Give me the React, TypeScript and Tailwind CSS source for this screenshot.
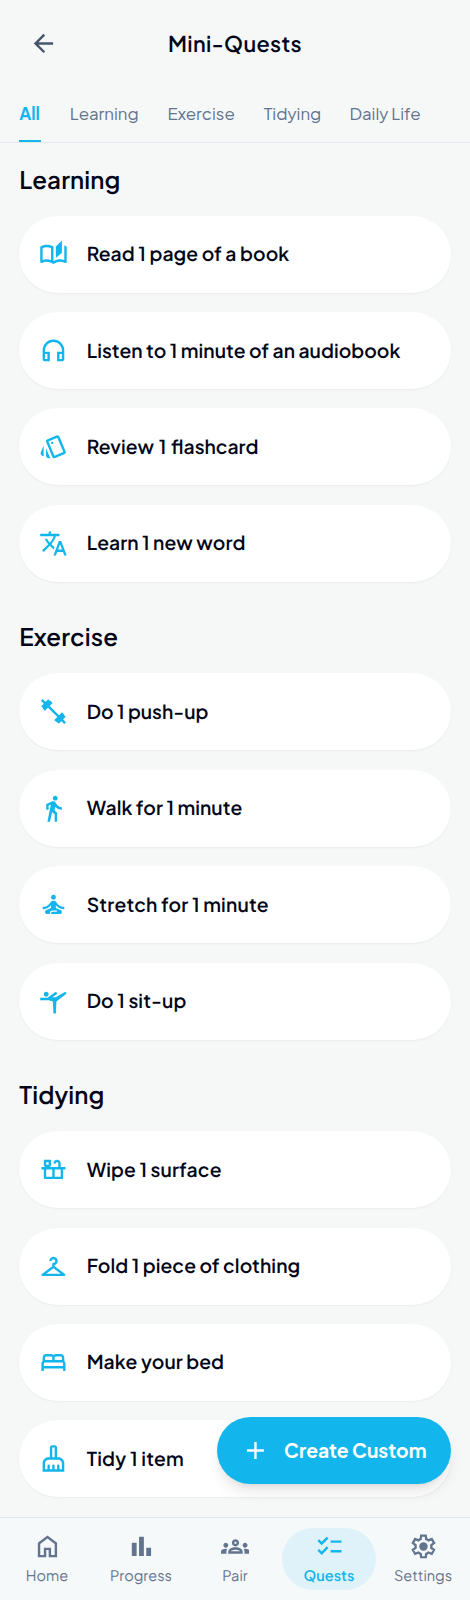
import type { ComponentType } from "react";
import {
  MdAdd,
  MdArrowBack,
  MdBarChart,
  MdCheckroom,
  MdChecklist,
  MdDirectionsWalk,
  MdOutlineAutoStories,
  MdOutlineBed,
  MdOutlineCleaningServices,
  MdOutlineCountertops,
  MdOutlineGroups,
  MdOutlineHeadphones,
  MdOutlineStyle,
  MdSelfImprovement,
  MdSportsGymnastics,
  MdTranslate,
} from "react-icons/md";

type Icon = ComponentType<{ className?: string }>;
type Quest = { label: string; icon: Icon; spacing: string };
type Section = { title: string; quests: Quest[] };

function HomeIcon({ className }: { className?: string }) {
  return (
    <svg viewBox="0 0 24 24" fill="currentColor" className={className}>
      <path d="M6 19h3v-6h6v6h3v-9l-6-4.5L6 10v9Zm-2 2V9l8-6 8 6v12h-7v-6h-2v6H4Z" />
    </svg>
  );
}

const gear =
  "m9.25 22-.4-3.2q-.325-.125-.612-.3-.288-.175-.563-.375L4.7 19.375l-2.75-4.75 2.575-1.95Q4.5 12.5 4.5 12.337v-.675q0-.162.025-.337L1.95 9.375l2.75-4.75 2.975 1.25q.275-.2.575-.375.3-.175.6-.3l.4-3.2h5.5l.4 3.2q.325.125.613.3.287.175.562.375l2.975-1.25 2.75 4.75-2.575 1.95q.025.175.025.337v.675q0 .163-.05.338l2.575 1.95-2.75 4.75-2.95-1.25q-.275.2-.575.375-.3.175-.6.3l-.4 3.2Z";

function SettingsIcon({ className }: { className?: string }) {
  return (
    <svg viewBox="0 0 24 24" className={className}>
      <clipPath id="gear-shape">
        <path d={gear} />
      </clipPath>
      <path d={gear} fill="none" stroke="currentColor" strokeWidth="3.8" clipPath="url(#gear-shape)" />
      <circle cx="12" cy="12" r="3.5" fill="currentColor" />
    </svg>
  );
}

function DumbbellIcon({ className }: { className?: string }) {
  return (
    <svg viewBox="0 0 24 24" fill="none" stroke="currentColor" className={className}>
      <path strokeWidth="2" d="m7 7 10 10" />
      <path strokeWidth="2.6" d="M2.7 8.5 8.5 2.7M4 10.4 10.4 4M13.6 20 20 13.6M15.5 21.3l5.8-5.8" />
      <path strokeWidth="2.1" d="m2.3 2.3 4 4M17.7 17.7l4 4" />
    </svg>
  );
}

const sections: Section[] = [
  {
    title: "Learning",
    quests: [
      { label: "Read 1 page of a book", icon: MdOutlineAutoStories, spacing: "tracking-[0.08px]" },
      { label: "Listen to 1 minute of an audiobook", icon: MdOutlineHeadphones, spacing: "tracking-[0.04px]" },
      { label: "Review 1 flashcard", icon: MdOutlineStyle, spacing: "[word-spacing:1.4px]" },
      { label: "Learn 1 new word", icon: MdTranslate, spacing: "tracking-[0.07px]" },
    ],
  },
  {
    title: "Exercise",
    quests: [
      { label: "Do 1 push-up", icon: DumbbellIcon, spacing: "tracking-normal" },
      { label: "Walk for 1 minute", icon: MdDirectionsWalk, spacing: "tracking-[0.06px]" },
      { label: "Stretch for 1 minute", icon: MdSelfImprovement, spacing: "tracking-[0.16px]" },
      { label: "Do 1 sit-up", icon: MdSportsGymnastics, spacing: "tracking-[0.1px]" },
    ],
  },
  {
    title: "Tidying",
    quests: [
      { label: "Wipe 1 surface", icon: MdOutlineCountertops, spacing: "tracking-[0.1px]" },
      { label: "Fold 1 piece of clothing", icon: MdCheckroom, spacing: "tracking-[0.07px]" },
      { label: "Make your bed", icon: MdOutlineBed, spacing: "tracking-[0.06px]" },
      { label: "Tidy 1 item", icon: MdOutlineCleaningServices, spacing: "tracking-[0.2px]" },
    ],
  },
];

const tabs = [
  { label: "All", width: "w-[21.6px]", active: true },
  { label: "Learning", width: "w-[68.8px]", active: false },
  { label: "Exercise", width: "w-[67.3px]", active: false },
  { label: "Tidying", width: "w-[57px]", active: false },
  { label: "Daily Life", width: "w-[71px]", active: false },
];

const navItems: { label: string; icon: Icon; active?: boolean }[] = [
  { label: "Home", icon: HomeIcon },
  { label: "Progress", icon: MdBarChart },
  { label: "Pair", icon: MdOutlineGroups },
  { label: "Quests", icon: MdChecklist, active: true },
  { label: "Settings", icon: SettingsIcon },
];

export default function App() {
  return (
    <div className="relative flex h-[1600px] w-[470px] flex-col overflow-hidden bg-[#f6f8f8] font-['Plus_Jakarta_Sans',Inter,sans-serif] text-slate-950 [--spacing:4.82px] [text-rendering:geometricPrecision]">
      <header className="flex h-18 shrink-0 items-center px-4">
        <button className="flex size-10 items-center justify-center text-slate-600">
          <MdArrowBack className="size-6" />
        </button>
        <h1 className="flex-1 pr-10 text-center text-[21.7px] font-semibold tracking-[0.3px] whitespace-nowrap">
          Mini-Quests
        </h1>
      </header>

      <nav className="flex shrink-0 gap-6 border-b border-slate-200 px-4 pt-3">
        {tabs.map((t) => (
          <button
            key={t.label}
            className={`flex h-[41px] shrink-0 items-start border-b-2 text-[16.9px] leading-[25.1px] whitespace-nowrap ${t.width} ${
              t.active ? "border-[#13b6ec] font-bold text-[#13b6ec]" : "border-transparent text-slate-500"
            }`}
          >
            {t.label}
          </button>
        ))}
      </nav>

      <main className="flex min-h-0 flex-1 flex-col gap-8 px-4 pt-[19.4px]">
        {sections.map((s) => (
          <section key={s.title} className="flex flex-col gap-4">
            <h2 className="h-7 text-[24.1px] leading-[35.5px] font-semibold tracking-[0.1px]">{s.title}</h2>
            {s.quests.map(({ label, icon: Icon, spacing }) => (
              <div
                key={label}
                className="flex h-16 items-center gap-4 rounded-full bg-white px-4 shadow-[0_1px_2px_rgba(0,0,0,0.05)]"
              >
                <Icon className="size-6 shrink-0 text-[#13b6ec]" />
                <span className={`pt-px text-[19.3px] font-semibold whitespace-nowrap ${spacing}`}>{label}</span>
              </div>
            ))}
          </section>
        ))}
      </main>

      <button className="absolute top-[1417px] right-[19px] flex h-[67px] w-[234px] items-center rounded-full bg-[#13b6ec] pl-6 text-white shadow-lg">
        <MdAdd className="-ml-1 size-6" />
        <span className="ml-[14px] text-[19.3px] font-bold whitespace-nowrap">Create Custom</span>
      </button>

      <footer className="flex h-[83px] shrink-0 border-t border-slate-200 bg-[#f6f9fa] py-2">
        {navItems.map(({ label, icon: Icon, active }) => (
          <a
            key={label}
            className={`flex h-13 flex-1 flex-col items-center gap-1 rounded-full pt-1 ${
              active ? "bg-[#e0f2f9] font-semibold text-[#13b6ec]" : "text-slate-500"
            }`}
          >
            <Icon className="size-6" />
            <span className="text-[14.5px] leading-[20px] whitespace-nowrap">{label}</span>
          </a>
        ))}
      </footer>
    </div>
  );
}
